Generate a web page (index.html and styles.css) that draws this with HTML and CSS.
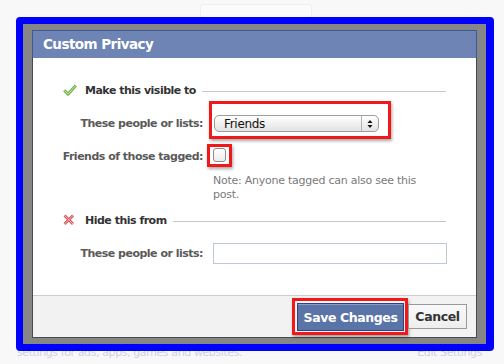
FILE: index.html
```html
<!DOCTYPE html>
<html>
<head>
<meta charset="utf-8">
<link rel="stylesheet" href="styles.css">
</head>
<body>
<div class="page">
  <div class="page-top"></div>
  <div class="page-bottom">
    <span>settings for ads, apps, games and websites.</span>
    <span>Edit Settings</span>
  </div>
</div>

<div class="modal">
  <div class="frame">
    <div class="dialog">
      <div class="dialog-header">Custom Privacy</div>
      <div class="dialog-body">
        <div class="section">
          <svg class="icon" width="14" height="12" viewBox="0 0 14 12">
            <path d="M1.2 6.3 L5 10.2 L12.8 1.4" fill="none" stroke="#6fae4a" stroke-width="3" stroke-linejoin="round"/>
            <path d="M1.2 6.3 L5 10.2 L12.8 1.4" fill="none" stroke="#cdeab3" stroke-width="1" stroke-linejoin="round"/>
          </svg>
          <span class="section-title">Make this visible to</span>
          <span class="section-line"></span>
        </div>

        <div class="field field-select">
          <span class="label">These people or lists:</span>
          <span class="mark mark-select">
            <span class="select">
              <span class="select-text">Friends</span>
              <span class="select-arrows">
                <svg width="6" height="10" viewBox="0 0 6 10">
                  <path d="M0.5 4 L3 1 L5.5 4 Z" fill="#111"/>
                  <path d="M0.5 6 L3 9 L5.5 6 Z" fill="#111"/>
                </svg>
              </span>
            </span>
          </span>
        </div>

        <div class="field field-check">
          <span class="label">Friends of those tagged:</span>
          <span class="mark mark-check">
            <span class="checkbox"></span>
          </span>
        </div>

        <div class="note">Note: Anyone tagged can also see this post.</div>

        <div class="section section-hide">
          <svg class="icon" width="14" height="12" viewBox="0 0 14 12">
            <path d="M1.5 1.5 L10 10 M10 1.5 L1.5 10" fill="none" stroke="#d9545c" stroke-width="2.8"/>
            <path d="M1.5 1.5 L10 10 M10 1.5 L1.5 10" fill="none" stroke="#f6c9cc" stroke-width="0.8"/>
          </svg>
          <span class="section-title">Hide this from</span>
          <span class="section-line"></span>
        </div>

        <div class="field field-input">
          <span class="label">These people or lists:</span>
          <span class="text-input"></span>
        </div>
      </div>
      <div class="dialog-footer">
        <span class="mark mark-save">
          <span class="btn btn-primary">Save Changes</span>
        </span>
        <span class="btn btn-cancel">Cancel</span>
      </div>
    </div>
  </div>
</div>
</body>
</html>
```

FILE: styles.css
```css
html, body {
  margin: 0;
  padding: 0;
}

body {
  width: 504px;
  height: 364px;
  overflow: hidden;
  background: #f8f8f8;
  font-family: "DejaVu Sans", Verdana, sans-serif;
  position: relative;
}

.page {
  height: 364px;
  display: flex;
  flex-direction: column;
  justify-content: space-between;
}

.page-top {
  margin: 4px 0 0 200px;
  width: 110px;
  height: 13px;
  border: 1px solid #efefef;
  border-radius: 3px;
  background: #fbfbfb;
}

.page-bottom {
  display: flex;
  justify-content: space-between;
  padding: 0 22px 4px 17px;
  font-size: 11px;
  letter-spacing: -0.4px;
  color: #cdd2dc;
  line-height: 14px;
}

/* modal overlay */
.modal {
  position: absolute;
  left: 16px;
  top: 17px;
}

.frame {
  border-style: solid;
  border-color: #0000ff;
  border-width: 7px 8px 7px 7px;
  border-radius: 4px;
  background: #868686;
  padding: 6px 9px 6px 9px;
}

.dialog {
  width: 443px;
  border: 1px solid #4a4a4a;
  background: #fff;
}

.dialog-header {
  height: 27px;
  line-height: 27px;
  margin: -1px -1px 0 -1px;
  border: 1px solid #3b5998;
  border-bottom: none;
  background: #6d84b4;
  color: #fff;
  font-size: 13.5px;
  font-weight: bold;
  letter-spacing: -0.55px;
  padding-left: 10px;
}

.dialog-body {
  padding: 25px 30px 31px 0;
  font-size: 11px;
  letter-spacing: -0.5px;
}

.section {
  display: flex;
  align-items: center;
  height: 14px;
  padding-left: 30px;
}

.icon {
  flex: none;
  margin-right: 8px;
}

.section-title {
  font-weight: bold;
  color: #333;
}

.section-line {
  flex: 1;
  height: 1px;
  background: #c8c8c8;
  margin: 2px 0 0 6px;
}

.field {
  display: flex;
  align-items: center;
}

.label {
  width: 170px;
  flex: none;
  text-align: right;
  font-weight: bold;
  color: #5a5a5a;
}

.field-select {
  margin-top: 14px;
  height: 24px;
}

.field-check {
  margin-top: 11px;
  height: 20px;
}

.field-input {
  margin-top: 16px;
  height: 21px;
}

/* red annotation boxes */
.mark {
  border: 3px solid #f01818;
  box-shadow: 1px 2px 3px rgba(0, 0, 0, 0.35);
  display: inline-flex;
}

.mark-select {
  align-self: flex-start;
  margin: -10px 0 -4px 6px;
  padding: 11px 9px 4px 2px;
}

.select {
  width: 165px;
  height: 17px;
  box-sizing: border-box;
  border: 1px solid #9d9d9d;
  border-radius: 5px;
  background: linear-gradient(#ffffff, #f1f1f1 50%, #e3e3e3);
  display: flex;
  align-items: center;
}

.select-text {
  flex: 1;
  padding-left: 9px;
  font-size: 12px;
  letter-spacing: -0.3px;
  color: #111;
}

.select-arrows {
  width: 16px;
  height: 100%;
  border-left: 1px solid #b3b3b3;
  display: flex;
  align-items: center;
  justify-content: center;
}

.mark-check {
  align-self: flex-start;
  margin: -2px 0 -1px 4px;
  padding: 1px 3px 2px 3px;
}

.checkbox {
  width: 13px;
  height: 14px;
  box-sizing: border-box;
  border: 1px solid #8c8c8c;
  border-radius: 3px;
  background: linear-gradient(#ffffff, #ececec);
}

.note {
  margin: 8px 0 0 180px;
  width: 222px;
  line-height: 14px;
  letter-spacing: -0.25px;
  color: #7a7a7a;
}

.section-hide {
  margin-top: 11px;
}

.text-input {
  margin-left: 10px;
  flex: 1;
  height: 21px;
  box-sizing: border-box;
  border: 1px solid #bdc7d8;
  background: #fff;
  margin-right: -1px;
}

.dialog-footer {
  border-top: 1px solid #cccccc;
  background: #f2f2f2;
  height: 41px;
  display: flex;
  justify-content: flex-end;
  align-items: center;
  padding-right: 9px;
}

.mark-save {
  padding: 2px 1px 1px 2px;
}

.btn {
  box-sizing: border-box;
  display: inline-flex;
  align-items: center;
  justify-content: center;
  font-weight: bold;
  font-size: 12.5px;
  letter-spacing: -0.4px;
}

.btn-primary {
  width: 107px;
  height: 28px;
  background: #5b74a8;
  border: 1px solid #29447e;
  box-shadow: inset 0 1px 0 #8a9cc2;
  color: #fff;
}

.btn-cancel {
  width: 59px;
  height: 25px;
  background: linear-gradient(#f9f9f9, #eeeeee);
  border: 1px solid #999;
  color: #333;
}
```
